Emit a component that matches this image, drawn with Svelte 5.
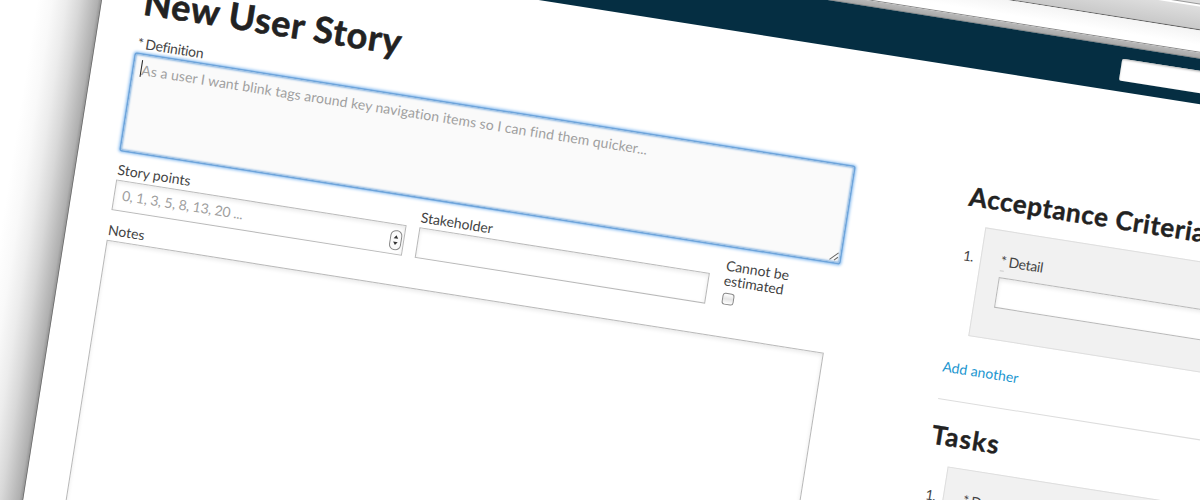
<script>
  const placeholder = 'As a user I want blink tags around key navigation items so I can find them quicker...';
</script>

<div class="stage">
  <div class="window">
    <div class="shadow"></div>
    <div class="tabs"></div>
    <div class="toolbar"></div>
    <div class="strip"></div>
    <header><div class="search"></div></header>
    <div class="page">
      <main>
        <h1><span>New User Story</span></h1>
        <div class="label first"><span class="star">*</span><span class="t-def">Definition</span></div>
        <div class="definition">
          <i class="caret"></i><span class="t-ph">{placeholder}</span>
          <svg class="grip" width="10" height="10" viewBox="0 0 10 10"><path d="M1 9L9 1M5.5 9L9 5.5" /></svg>
        </div>
        <div class="row">
          <div class="field">
            <div class="label"><span>Story points</span></div>
            <div class="input">
              <span class="t-num">0, 1, 3, 5, 8, 13, 20 ...</span>
              <svg class="spin" width="13" height="21" viewBox="0 0 13 21">
                <rect x="1" y="1" width="11" height="19" rx="5" />
                <path d="M6.5 5.5L8.8 8.8H4.2ZM6.5 15.5L8.8 12.2H4.2Z" />
              </svg>
            </div>
          </div>
          <div class="field">
            <div class="label"><span>Stakeholder</span></div>
            <div class="input"></div>
          </div>
          <div class="check">
            <span>Cannot be</span>
            <span>estimated</span>
            <i class="box"></i>
          </div>
        </div>
        <div class="label notes-label"><span>Notes</span></div>
        <div class="notes"></div>
      </main>
      <aside>
        <h2><span>Acceptance Criteria</span></h2>
        <div class="item">
          <span class="num">1.</span>
          <div class="card">
            <div class="label"><span class="star dotted">*</span><span class="t-det">Detail</span></div>
            <div class="input"></div>
          </div>
        </div>
        <a class="add" href="#add">Add another</a>
        <h2 class="tasks"><span class="t-task">Tasks</span></h2>
        <div class="item">
          <span class="num">1.</span>
          <div class="card">
            <div class="label"><span class="star">*</span><span class="t-det">Description</span></div>
            <div class="input"></div>
          </div>
        </div>
      </aside>
    </div>
  </div>
</div>

<style>
  :global(body) { background: #fff; overflow: hidden; }
  .stage {
    position: relative; width: 1200px; height: 500px; overflow: hidden;
    font-family: Lato, "Open Sans", sans-serif; color: #444; font-size: 14px;
    font-variant-ligatures: none;
  }
  .stage * { box-sizing: border-box; }
  /* The browser window is tilted about the point where its left side meets the top of the stage. */
  .window {
    position: absolute; left: 102px; top: -230px; width: 1400px; height: 900px;
    transform-origin: 0 230px; transform: rotate(8.96deg);
    background: #fff; display: flex; flex-direction: column;
    white-space: nowrap;
  }
  .shadow {
    position: absolute; right: 100%; top: 0; bottom: 0; width: 66px;
    background: linear-gradient(to left, #555 0, #999 1.2px, #b0b0b0 4px, #c2c2c2 12px, #d8d8d8 22px, #ececec 35px, #f9f9f9 49px, #fff 64px);
  }
  .tabs { flex: none; height: 89px; background: linear-gradient(#ddd 62px, #999 63px, #fff 64px, #fff 65px, #dedede 66px, #c9c9c9); border-bottom: 1px solid #666; }
  .toolbar { flex: none; height: 22px; background: linear-gradient(#f4f4f4, #fff 70%); border-bottom: 1px solid #888; }
  .strip { flex: none; height: 6px; background: linear-gradient(#b9b9b9, #aaa 80%, #777); }
  header { flex: none; height: 45px; background: #052e42; padding: 12px 0 0 1017px; }
  .search { width: 260px; height: 21.5px; background: #fff; border-radius: 2px; box-shadow: inset 0 1px 2px #bbb; }
  .page { flex: 1; display: flex; padding-left: 42px; }
  main { width: 726px; flex: none; }
  aside { margin-left: 119.5px; width: 500px; flex: none; padding-top: 106px; }
  span { display: inline-block; }
  h1 { margin: 0; height: 94px; padding-top: 39.5px; line-height: 44px; font-size: 36px; letter-spacing: .72px; color: #222; font-weight: 700; -webkit-text-stroke: .6px #222; }
  h2 { margin: 0; height: 49px; line-height: 40px; font-size: 26px; letter-spacing: .65px; color: #222; font-weight: 700; -webkit-text-stroke: .4px #222; }
  .label { height: 17px; line-height: 14px; display: flex; }
  .star { width: 8px; }
  .first { height: 21px; padding-top: 4px; }
  .t-def { letter-spacing: -.3px; }
  .definition {
    position: relative; margin: 1px 0 2px -.5px; width: 727px; height: 97px; background: #fafafa;
    border-radius: 1px;
    box-shadow: 0 0 0 1.5px #6ea4da, 0 0 3px 2.5px #8cbef0, inset 0 0 2px 1px #84b2e0;
    padding: 5.5px 8.5px; line-height: 18px; color: #a0a0a0;
  }
  .t-ph { letter-spacing: .085px; }
  .caret { position: absolute; left: 7.5px; top: 5px; width: 1px; height: 17px; background: #222; }
  .grip { position: absolute; right: 1px; bottom: 1px; fill: none; stroke: #666; stroke-width: 1; }
  .row { display: flex; gap: 13px; margin-top: 12.5px; }
  .field { width: 294px; }
  .input {
    height: 31px; background: #fff; border: 1px solid #b8b8b8; box-shadow: inset 0 2px 4px #e9e9e9;
    display: flex; align-items: center; justify-content: space-between; padding: 0 1px 0 7.5px; color: #a0a0a0;
  }
  .t-num { letter-spacing: -.2px; padding-bottom: 2px; }
  .spin { position: relative; top: 1px; }
  .spin rect { fill: #fafafa; stroke: #888; }
  .spin path { fill: #333; }
  .check { padding: .5px 0 0 2px; display: flex; flex-direction: column; line-height: 14.5px; }
  .box { width: 12px; height: 12px; margin: 5px 0 0 1px; border: 1px solid #888; border-radius: 3px; background: linear-gradient(#fff, #e5e5e5 50%, #fff); }
  .notes-label { margin-top: 12px; height: 18px; line-height: 16px; }
  .notes { height: 500px; border: 1px solid #b8b8b8; box-shadow: inset 0 2px 4px #e9e9e9; }
  .item { display: flex; }
  .num { width: 20px; padding: 21px 0 0 3px; line-height: 20px; flex: none; letter-spacing: -.7px; }
  .card { width: 450px; height: 110px; background: #f1f1f1; border: 1px solid #dedede; padding: 24px 20px; }
  .card .label { height: 22px; line-height: 11px; }
  .card .t-det { letter-spacing: -.3px; }
  .dotted { height: 16px; background: linear-gradient(#ccc, #ccc) 0 100% / 4px 1px no-repeat; }
  .add { display: block; height: 67px; padding-top: 24px; line-height: 20px; color: #2196cf; text-decoration: none; border-bottom: 1px solid #ddd; }
  .tasks { height: 65px; padding-top: 15px; }
  .t-task { letter-spacing: 1.2px; }
</style>
